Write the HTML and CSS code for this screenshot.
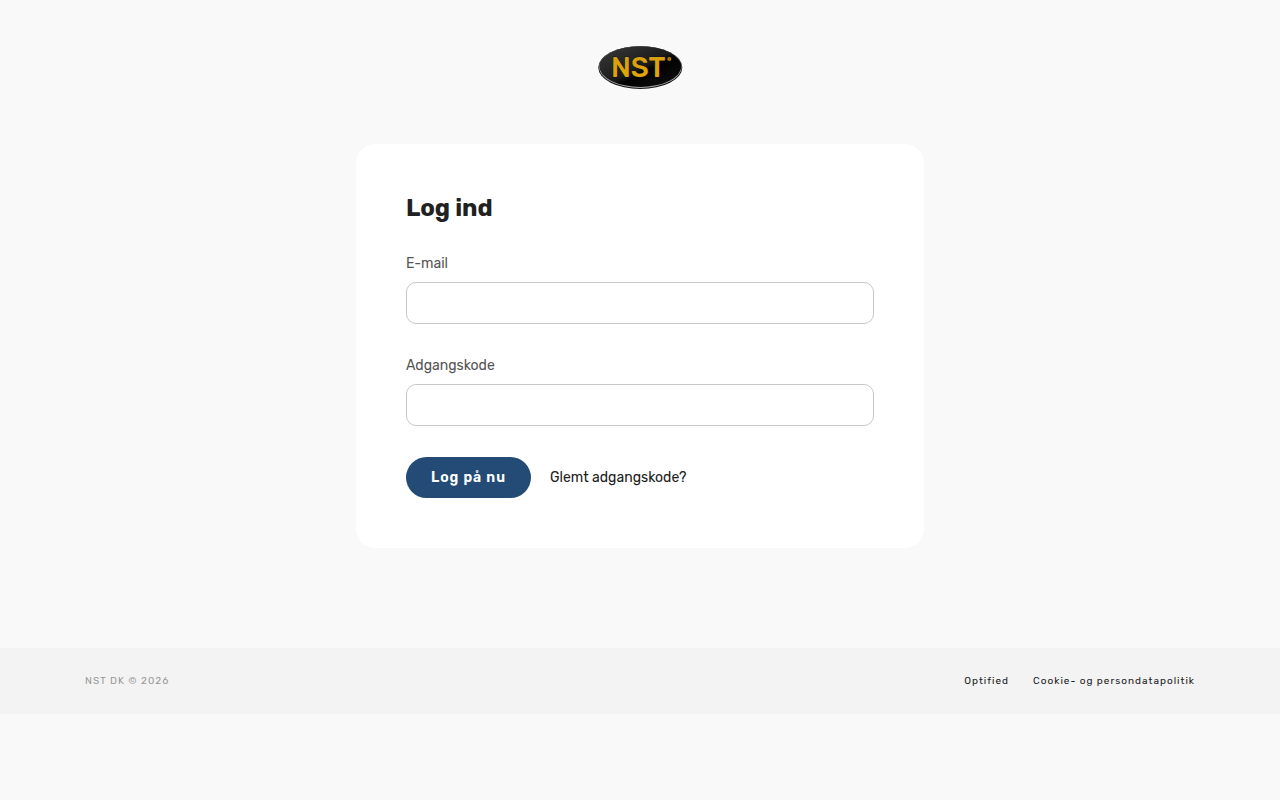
FILE: index.html
```html
<!DOCTYPE html>
<html lang="da">
<head>
    <meta charset="UTF-8">
    <meta name="viewport" content="width=device-width, initial-scale=1">
    <title>Log ind</title>
    <link rel="stylesheet" href="styles.css">
</head>
<body>
    <header class="header">
        <a href="#" class="logo">
            <svg width="86" height="46" viewBox="0 0 86 46" role="img" aria-label="NST">
                <defs>
                    <linearGradient id="oval" x1="0" y1="0" x2="1" y2="1">
                        <stop offset="0" stop-color="#3a3a3a"/>
                        <stop offset=".5" stop-color="#1c1c1c"/>
                        <stop offset=".6" stop-color="#020202"/>
                        <stop offset="1" stop-color="#111"/>
                    </linearGradient>
                    <linearGradient id="gold" x1="0" y1="0" x2="0" y2="1">
                        <stop offset="0" stop-color="#d39d14"/>
                        <stop offset="1" stop-color="#e8a800"/>
                    </linearGradient>
                </defs>
                <ellipse cx="43.3" cy="23.5" rx="42" ry="21.5" fill="#111"/>
                <ellipse cx="43.3" cy="23.1" rx="41.4" ry="20.8" fill="#aaa"/>
                <ellipse cx="43.3" cy="22.6" rx="41" ry="20.3" fill="url(#oval)"/>
                <text class="logo-text" x="14" y="33" fill="url(#gold)">NST</text>
                <circle cx="72.3" cy="15" r="2" fill="#b5830c"/>
                <circle cx="72.3" cy="15" r=".6" fill="#4a3608"/>
            </svg>
        </a>
    </header>
    <main class="main">
        <form class="card" action="#" method="post">
            <h1>Log ind</h1>
            <div class="field">
                <label for="email">E-mail</label>
                <input type="email" id="email" name="email">
            </div>
            <div class="field">
                <label for="password">Adgangskode</label>
                <input type="password" id="password" name="password">
            </div>
            <div class="actions">
                <button type="submit" class="btn">Log på nu</button>
                <a href="#">Glemt adgangskode?</a>
            </div>
        </form>
    </main>
    <footer class="footer">
        <div class="container">
            <span class="copyright">NST DK © 2026</span>
            <nav class="footer-links">
                <a href="#">Optified</a>
                <a href="#">Cookie- og persondatapolitik</a>
            </nav>
        </div>
    </footer>
</body>
</html>
```
FILE: styles.css
```css
*{box-sizing: border-box;margin: 0;padding: 0;}
body{background: #f9f9f9;color: #212121;font: 14px/20px Rubik, Inter, sans-serif;}
a{color: #212121;text-decoration: none;}
a:hover{text-decoration: underline;}

.header{display: flex;justify-content: center;padding: 44px 20px 54px;}
.logo svg{display: block;}
.logo-text{font: 500 28px Rubik, Inter, sans-serif;stroke: #10141f;stroke-width: 1px;paint-order: stroke;}

.main{padding: 0 20px 100px;}
.card{max-width: 568px;margin: 0 auto;padding: 50px;background: #fff;border-radius: 20px;}
.card h1{margin-bottom: 30px;font-size: 24px;line-height: 29px;font-weight: 700;}
.field{margin-bottom: 31px;}
.field label{display: block;margin-bottom: 7px;line-height: 22px;color: #555;}
.field input{display: block;width: 100%;height: 42px;padding: 0 15px;border: 1px solid #c8c8c8;border-radius: 10px;background: #fff;font: inherit;}
.actions{display: flex;align-items: center;gap: 19px;}
.btn{height: 41px;padding: 0 25px;border: 0;border-radius: 21px;background: #234b75;color: #fff;font: inherit;font-weight: 600;letter-spacing: 1px;cursor: pointer;}

.footer{padding: 23px 20px;background: #f3f3f3;font-size: 10px;letter-spacing: 1px;}
.container{display: flex;justify-content: space-between;max-width: 1110px;margin: 0 auto;}
.copyright{color: #999;}
.footer-links{display: flex;gap: 24px;}
```
